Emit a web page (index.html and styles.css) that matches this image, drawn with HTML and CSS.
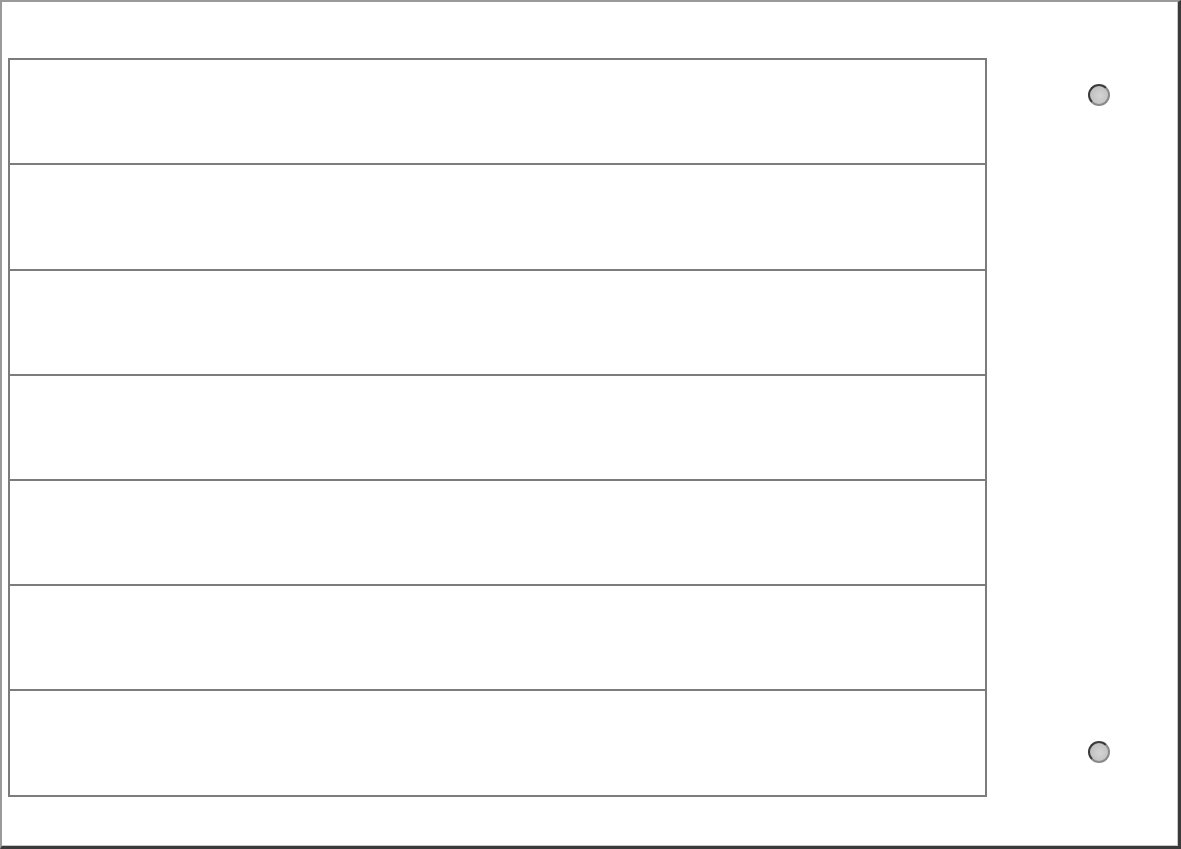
FILE: index.html
```html
<!DOCTYPE html>
<html>
<head>
<meta charset="utf-8">
<link rel="stylesheet" href="styles.css">
</head>
<body>
<div class="frame">
  <div class="sheet">
    <div class="row"></div>
    <div class="row"></div>
    <div class="row"></div>
    <div class="row"></div>
    <div class="row"></div>
    <div class="row"></div>
    <div class="row"></div>
  </div>
  <div class="holes">
    <span class="hole"></span>
    <span class="hole"></span>
  </div>
</div>
</body>
</html>
```
FILE: styles.css
```css
html, body {
  margin: 0;
  padding: 0;
  background: #ffffff;
  font-family: "Liberation Sans", Arial, sans-serif;
}
.frame {
  width: 1181px;
  height: 849px;
  box-sizing: border-box;
  border-style: solid;
  border-width: 2px 3px 3px 2px;
  border-color: #9a9a9a #3a3a3a #3a3a3a #9a9a9a;
  box-shadow: inset -1px -1px 0 #c8c8c8;
  padding: 56px 0 0 6px;
  display: flex;
  align-items: flex-start;
  background: #fff;
}
.sheet {
  width: 979px;
  box-sizing: border-box;
  border-left: 2px solid #7c7c7c;
  border-right: 2px solid #7c7c7c;
  border-bottom: 2px solid #7c7c7c;
  display: flex;
  flex-direction: column;
}
.row {
  height: 105px;
  box-sizing: border-box;
  border-top: 2px solid #7c7c7c;
}
.row:nth-child(2),
.row:nth-child(7) {
  height: 106px;
}
.holes {
  margin-left: 101px;
  height: 739px;
  box-sizing: border-box;
  padding: 26px 0 34px;
  display: flex;
  flex-direction: column;
  justify-content: space-between;
}
.hole {
  display: block;
  width: 22px;
  height: 22px;
  box-sizing: border-box;
  border-radius: 50%;
  border: 2px solid;
  border-color: #3a3a3a #8a8a8a #8a8a8a #3a3a3a;
  background: radial-gradient(circle at 55% 55%, #d4d4d4, #b8b8b8);
}
```
